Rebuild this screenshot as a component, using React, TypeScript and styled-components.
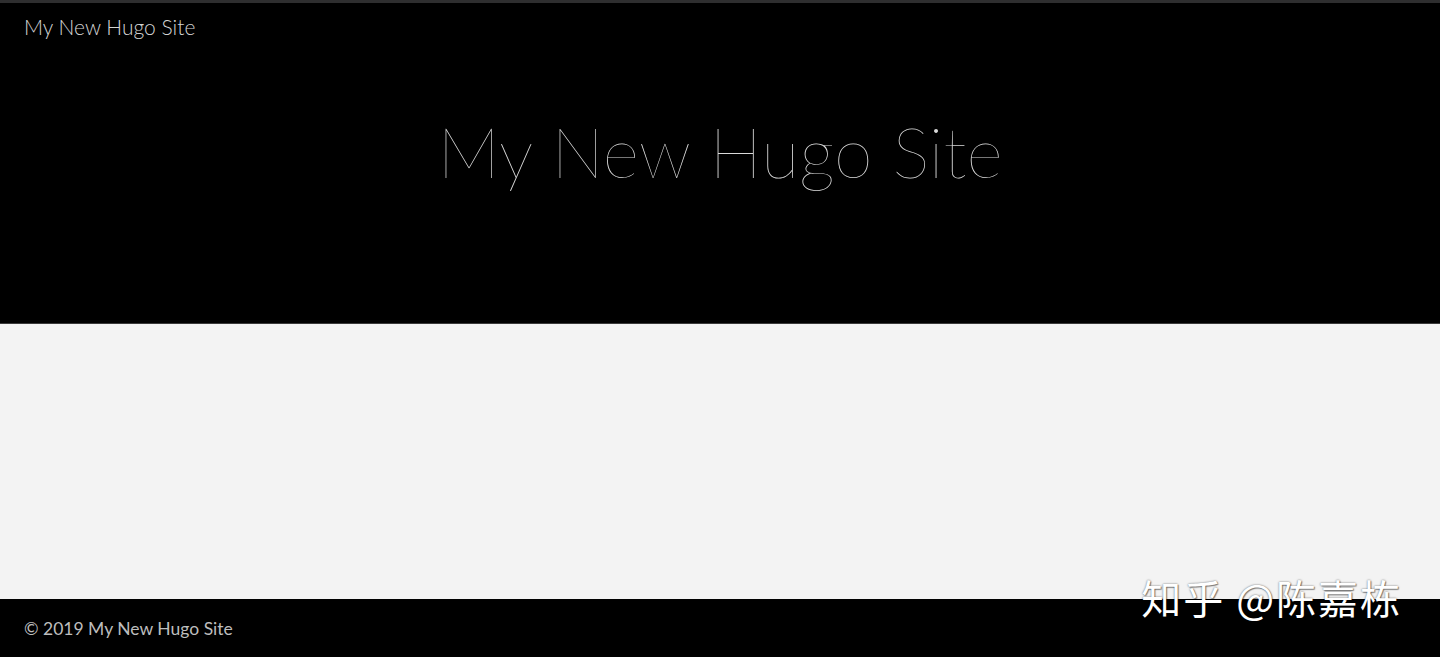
import React from 'react';
import styled, { createGlobalStyle } from 'styled-components';

const GlobalStyle = createGlobalStyle`
  html, body {
    margin: 0;
    padding: 0;
    background: #f3f3f3;
  }
  * {
    box-sizing: border-box;
  }
`;

const App: React.FC = () => {
  return (
    <Page>
      <GlobalStyle />
      <TopStrip />
      <Hero>
        <SiteLink href="#">My New Hugo Site</SiteLink>
        <HeroTitle>My New Hugo Site</HeroTitle>
      </Hero>
      <Content />
      <Footer>
        <FooterText>© 2019 My New Hugo Site</FooterText>
        <Watermark>知乎 @陈嘉栋</Watermark>
      </Footer>
    </Page>
  );
};

export default App;

const Page = styled.div`
  display: flex;
  flex-direction: column;
  width: 1440px;
  height: 657px;
  overflow: hidden;
  font-family: 'Lato', 'Open Sans', sans-serif;
`;

const TopStrip = styled.div`
  height: 3px;
  background: #2e2e2f;
`;

const Hero = styled.header`
  display: flex;
  flex-direction: column;
  height: 321px;
  padding: 12px 24px 0;
  background: #000;
  border-bottom: 1px solid #3a3a3a;
`;

const SiteLink = styled.a`
  align-self: flex-start;
  font-family: 'Lato', sans-serif;
  font-weight: 300;
  font-size: 21px;
  line-height: 24px;
  color: #d4d4d4;
  text-decoration: none;
`;

const HeroTitle = styled.h1`
  margin: 72px 0 0;
  text-align: center;
  font-family: 'Lato', sans-serif;
  font-weight: 100;
  font-size: 70px;
  line-height: 80px;
  letter-spacing: 0;
  color: #dadada;
`;

const Content = styled.main`
  flex: 1;
  background: #f3f3f3;
`;

const Footer = styled.footer`
  position: relative;
  display: flex;
  align-items: center;
  height: 58px;
  padding: 0 24px;
  background: #000;
`;

const FooterText = styled.p`
  margin: 0;
  font-family: 'Lato', sans-serif;
  font-weight: 400;
  font-size: 17.5px;
  color: #bdbdbd;
`;

const Watermark = styled.span`
  position: absolute;
  right: 38px;
  top: -28px;
  font-family: 'Noto Sans CJK SC', sans-serif;
  font-weight: 400;
  font-size: 40px;
  line-height: 52px;
  letter-spacing: 2px;
  color: #fff;
  text-shadow: 0 0 2px rgba(0, 0, 0, 0.6), 1px 1px 1px rgba(0, 0, 0, 0.4);
`;
